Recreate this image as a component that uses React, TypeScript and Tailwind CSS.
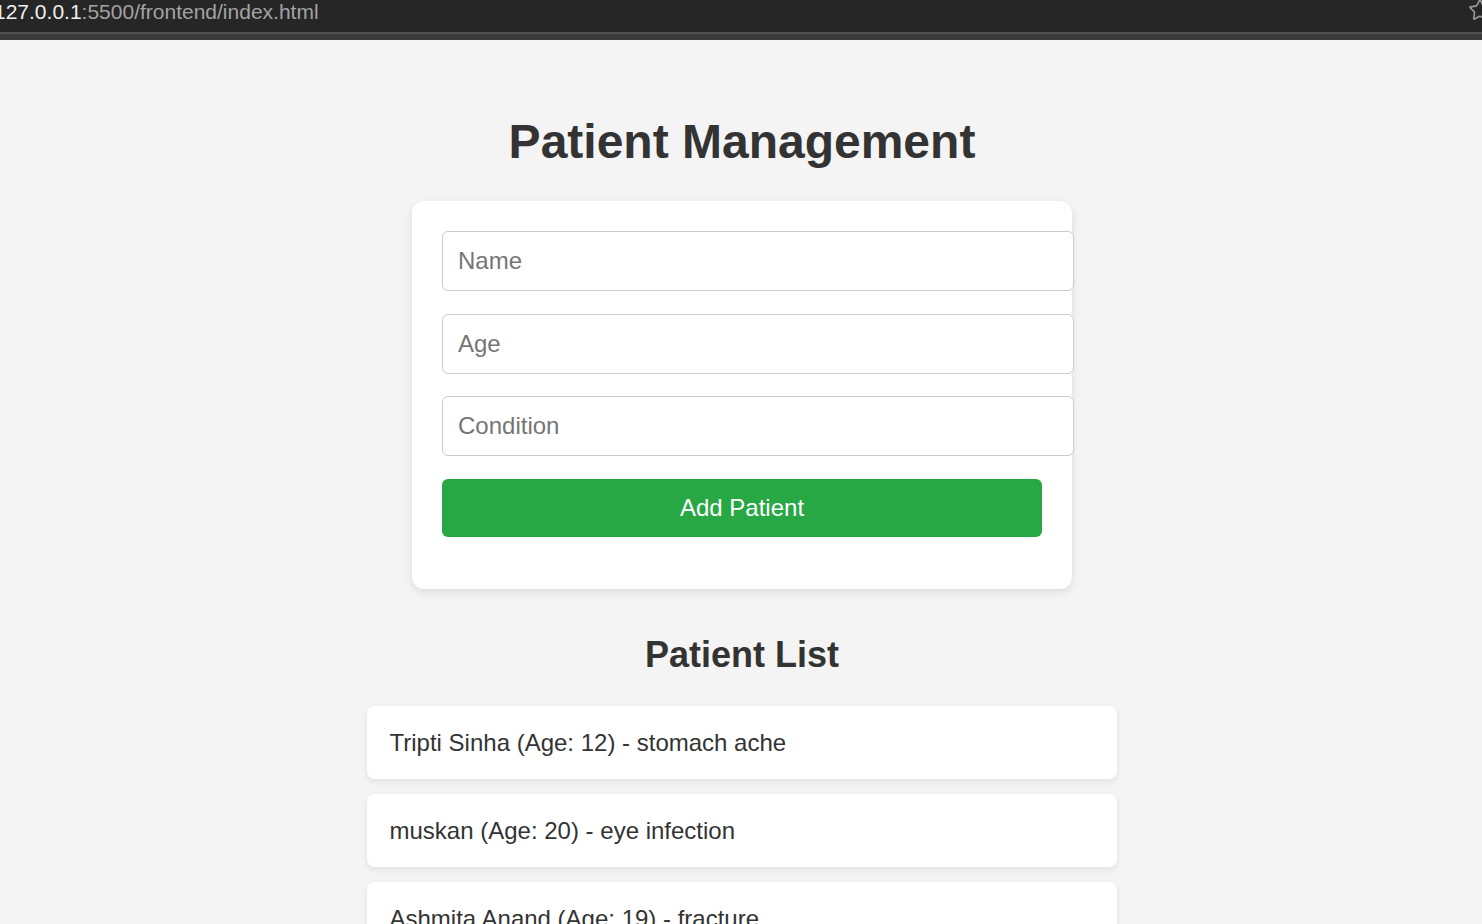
import { Star } from "lucide-react";

type Patient = {
    name: string
    age: number
    condition: string
}

const patients: Patient[] = [
    { name: "Tripti Sinha", age: 12, condition: "stomach ache" },
    { name: "muskan", age: 20, condition: "eye infection" },
    { name: "Ashmita Anand", age: 19, condition: "fracture" },
]

const BrowserBar = () => {
    return (
        <div className="h-[40px] shrink-0 bg-[#262626] flex flex-col overflow-hidden">
            <div className="h-[32px] flex items-center justify-between overflow-hidden">
                <p className="-ml-[6px] text-[21px] leading-none whitespace-nowrap -mt-[10px]" style={{ fontFamily: '"Liberation Sans", Arial, sans-serif' }}>
                    <span className="text-[#f0f0f0]">127.0.0.1</span>
                    <span className="text-[#a3a3a3]">:5500/frontend/index.html</span>
                </p>
                <Star className="-mr-[10px] -mt-[12px] text-[#9a9a9a]" size={24} strokeWidth={1.6} />
            </div>
            <div className="h-[2px] bg-[#4f4f4f]"></div>
            <div className="flex-1 bg-[#3a3a3a]"></div>
        </div>
    )
}

export default function App() {
    return (
        <div className="h-[924px] overflow-hidden flex flex-col bg-[#f4f4f4] text-[#333]" style={{ fontFamily: '"Liberation Sans", Arial, sans-serif' }}>
            <BrowserBar />

            <div className="flex flex-col items-center pt-[74px] pl-[2px]">
                <h1 className="text-[48px] font-bold leading-[55px] m-0">Patient Management</h1>

                <div className="mt-[32px] w-[660px] bg-white rounded-[12px] p-[30px] shadow-[0_3px_8px_rgba(0,0,0,0.1)]">
                    <input
                        className="block w-[632px] h-[60px] mb-[22.5px] px-[15px] text-[24px] border border-[#ccc] rounded-[6px] bg-white outline-none placeholder:text-[#757575]"
                        placeholder="Name"
                    />
                    <input
                        className="block w-[632px] h-[60px] mb-[22.5px] px-[15px] text-[24px] border border-[#ccc] rounded-[6px] bg-white outline-none placeholder:text-[#757575]"
                        placeholder="Age"
                    />
                    <input
                        className="block w-[632px] h-[60px] mb-[22.5px] px-[15px] text-[24px] border border-[#ccc] rounded-[6px] bg-white outline-none placeholder:text-[#757575]"
                        placeholder="Condition"
                    />
                    <button className="block w-[600px] h-[58px] mb-[22.5px] bg-[#28a745] text-white text-[24px] rounded-[6px]">
                        Add Patient
                    </button>
                </div>

                <h2 className="mt-[45px] text-[36px] font-bold leading-[41px]">Patient List</h2>

                <ul className="mt-[31px] w-[750px] flex flex-col gap-[15.5px]">
                    {patients.map((p) => (
                        <li key={p.name} className="h-[72.5px] px-[22.5px] pt-[2px] flex items-center bg-white rounded-[8px] text-[24px] shadow-[0_3px_6px_rgba(0,0,0,0.08)]">
                            {p.name} (Age: {p.age}) - {p.condition}
                        </li>
                    ))}
                </ul>
            </div>
        </div>
    )
}
